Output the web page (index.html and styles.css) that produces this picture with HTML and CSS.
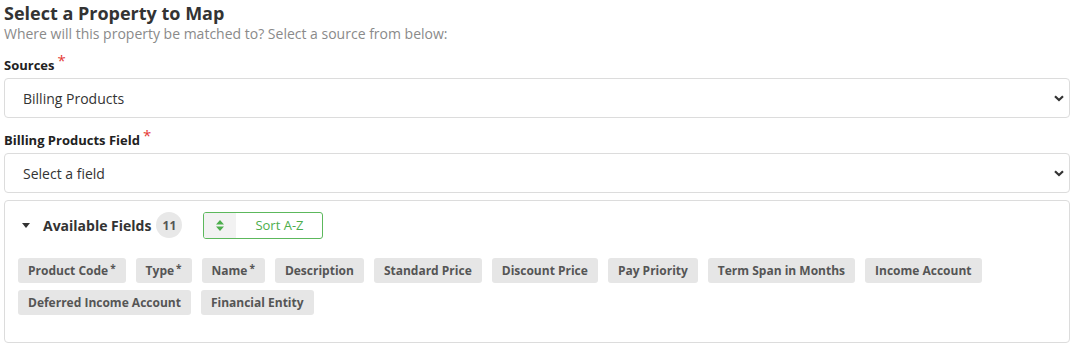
FILE: index.html
```html
<!DOCTYPE html>
<html lang="en">

<head>
    <meta charset="UTF-8">
    <title>Select a Property to Map</title>
    <link rel="stylesheet" href="styles.css">
</head>

<body>
    <div id="mapper">
        <h2 class="title">Select a Property to Map</h2>
        <p class="subtitle">Where will this property be matched to? Select a source from below:</p>

        <!-- Source select -->
        <label class="fieldLabel">Sources<span class="req">*</span></label>
        <div class="selectBox">
            <span>Billing Products</span>
            <svg class="chevron" width="10" height="7" viewBox="0 0 10 7"><path d="M1 1.2 L5 5 L9 1.2" fill="none" stroke="#333" stroke-width="2.2"/></svg>
        </div>

        <label class="fieldLabel">Billing Products Field<span class="req">*</span></label>
        <div class="selectBox">
            <span>Select a field</span>
            <svg class="chevron" width="10" height="7" viewBox="0 0 10 7"><path d="M1 1.2 L5 5 L9 1.2" fill="none" stroke="#333" stroke-width="2.2"/></svg>
        </div>

        <!-- Available fields panel -->
        <div class="panel">
            <div class="panelHead">
                <svg class="caret" width="8" height="5" viewBox="0 0 8 5"><path d="M0 0 H8 L4 5 Z" fill="#333"/></svg>
                <span class="panelTitle">Available Fields</span>
                <span class="count">11</span>
                <div class="sortBtn">
                    <span class="sortIcon">
                        <svg width="8" height="11" viewBox="0 0 8 11"><path d="M4 0 L8 4.4 H0 Z M0 6.6 H8 L4 11 Z" fill="#4cae4c"/></svg>
                    </span>
                    <span class="sortText">Sort A-Z</span>
                </div>
            </div>
            <div class="chips">
                <span class="chip">Product Code<sup>*</sup></span>
                <span class="chip">Type<sup>*</sup></span>
                <span class="chip">Name<sup>*</sup></span>
                <span class="chip">Description</span>
                <span class="chip">Standard Price</span>
                <span class="chip">Discount Price</span>
                <span class="chip">Pay Priority</span>
                <span class="chip">Term Span in Months</span>
                <span class="chip">Income Account</span>
                <span class="chip">Deferred Income Account</span>
                <span class="chip">Financial Entity</span>
            </div>
        </div>
    </div>
</body>

</html>
```

FILE: styles.css
```css
body {
    font-family: 'Open Sans', 'Noto Sans', sans-serif;
    margin: 0;
    padding: 0;
    background-color: #fff;
    color: #333;
}

#mapper {
    padding: 0 6px 0 4px;
}

.title {
    font-size: 18px;
    font-weight: 700;
    margin: 0;
    padding-top: 1px;
    line-height: 24px;
    color: #333;
}

.subtitle {
    font-size: 14px;
    color: #8a8a8a;
    margin: 0;
    line-height: 18px;
}

.fieldLabel {
    display: block;
    font-size: 13px;
    font-weight: 700;
    color: #222;
    margin: 12px 0 4px 0;
    line-height: 18px;
}

.req {
    color: #e53935;
    font-size: 15px;
    font-weight: 400;
    margin-left: 3px;
    position: relative;
    top: -4px;
}

.selectBox {
    display: flex;
    align-items: center;
    justify-content: space-between;
    height: 38px;
    border: 1px solid #dcdcdc;
    border-radius: 4px;
    padding: 0 5px 0 18px;
    font-size: 14px;
    color: #333;
}

.chevron {
    display: block;
}

.panel {
    margin-top: 7px;
    border: 1px solid #dcdcdc;
    border-radius: 4px;
    height: 141px;
    padding: 0 13px;
}

.panelHead {
    display: flex;
    align-items: center;
    height: 26px;
    margin-top: 11px;
    padding-left: 4px;
}

.caret {
    display: block;
    margin-right: 13px;
}

.panelTitle {
    font-size: 14px;
    font-weight: 700;
    color: #333;
}

.count {
    display: inline-flex;
    align-items: center;
    justify-content: center;
    width: 26px;
    height: 26px;
    border-radius: 50%;
    background-color: #e8e8e8;
    font-size: 12px;
    font-weight: 700;
    color: #555;
    margin-left: 5px;
}

.sortBtn {
    display: flex;
    margin-left: 21px;
    width: 118px;
    height: 25px;
    border: 1px solid #5cb85c;
    border-radius: 3px;
    overflow: hidden;
}

.sortIcon {
    display: flex;
    align-items: center;
    justify-content: center;
    width: 32px;
    background-color: #f2f2f2;
}

.sortText {
    flex: 1;
    display: flex;
    align-items: center;
    justify-content: center;
    font-size: 13px;
    color: #4cae4c;
}

.chips {
    display: flex;
    flex-wrap: wrap;
    gap: 7px 10px;
    margin-top: 20px;
}

.chip {
    display: inline-flex;
    align-items: center;
    height: 25px;
    padding: 0 10px;
    background-color: #e6e6e6;
    border-radius: 3px;
    font-size: 12px;
    font-weight: 700;
    color: #555;
}

.chip sup {
    font-size: 10px;
    margin-left: 2px;
    position: relative;
    top: -3px;
}
```
